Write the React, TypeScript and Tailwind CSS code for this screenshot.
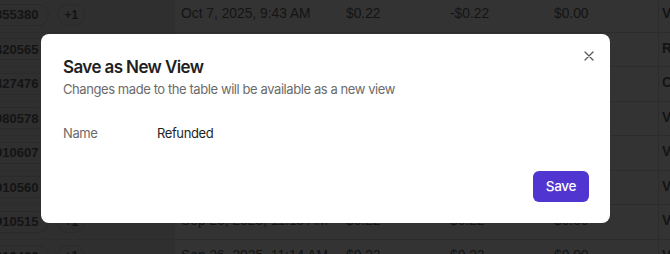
import React from "react";

const rows = [
  { id: "355380", date: "Oct 7, 2025, 9:43 AM", a: "$0.22", b: "-$0.22", c: "$0.00", s: "V" },
  { id: "420565", date: "Oct 7, 2025, 9:40 AM", a: "$0.22", b: "-$0.22", c: "$0.00", s: "R" },
  { id: "427476", date: "Oct 6, 2025, 3:12 PM", a: "$0.22", b: "$0.22", c: "$0.00", s: "C" },
  { id: "080578", date: "Oct 2, 2025, 10:05 AM", a: "$0.22", b: "$0.22", c: "$0.00", s: "V" },
  { id: "910607", date: "Sep 26, 2025, 11:17 AM", a: "$0.22", b: "$0.22", c: "$0.00", s: "V" },
  { id: "910560", date: "Sep 26, 2025, 11:16 AM", a: "$0.22", b: "$0.22", c: "$0.00", s: "V" },
  { id: "910515", date: "Sep 26, 2025, 11:15 AM", a: "$0.22", b: "$0.22", c: "$0.00", s: "V" },
  { id: "910466", date: "Sep 26, 2025, 11:14 AM", a: "$0.22", b: "$0.22", c: "$0.00", s: "V" },
];

export default function App() {
  return (
    <div
      className="relative w-[670px] h-[254px] overflow-hidden bg-[#333333] text-[#141414]"
      style={{ fontFamily: '"Liberation Sans", Arial, sans-serif' }}
    >
      <div className="-mt-[2px] flex flex-col">
        {rows.map((r, i) => (
          <div
            key={i}
            className="flex h-[34.5px] shrink-0 items-center border-b border-[#2c2c2c] text-[13.8px]"
          >
            <div className="flex h-full w-[175px] shrink-0 items-center bg-[#2f2f2f]">
              <div className="-ml-[14px] flex h-[22px] items-center rounded-full border border-[#2a2a2a] pl-[8px] pr-[10px] text-[13px] font-bold">
                {r.id}
              </div>
              <div className="ml-[8px] flex h-[22px] w-[28px] items-center justify-center rounded-full border border-[#2a2a2a] text-[12px] font-bold">
                +1
              </div>
            </div>
            <div className="w-[171px] shrink-0 pl-[6px]">{r.date}</div>
            <div className="w-[104px] shrink-0">{r.a}</div>
            <div className="w-[104px] shrink-0">{r.b}</div>
            <div className="w-[104px] shrink-0">{r.c}</div>
            <div className="flex h-full flex-1 items-center border-l border-[#2c2c2c] pl-[3px] font-bold">
              {r.s}
            </div>
          </div>
        ))}
      </div>

      <div
        className="absolute left-[41px] top-[34px] flex h-[189px] w-[569px] flex-col rounded-[8px] bg-white pl-[22px] pr-[21px] pt-[21px] pb-[21px]"
        style={{ fontFamily: 'Inter, "Noto Sans", sans-serif' }}
      >
        <button className="absolute right-[14px] top-[14.5px] flex h-[14px] w-[14px] items-center justify-center text-[#5a5a5a]">
          <svg width="14" height="14" viewBox="0 0 14 14" fill="none">
            <path d="M3 3L11 11M11 3L3 11" stroke="currentColor" strokeWidth="1.3" strokeLinecap="round" />
          </svg>
        </button>
        <div className="text-[17px] leading-[24px] font-semibold tracking-[-0.6px] text-[#1f1f1f]">
          Save as New View
        </div>
        <div className="text-[13px] leading-[20px] tracking-[-0.42px] text-[#6b6b6b]">
          Changes made to the table will be available as a new view
        </div>
        <div className="mt-[24px] flex text-[13px] leading-[20px] tracking-[-0.4px]">
          <div className="w-[94px] text-[#6b6b6b]">Name</div>
          <div className="text-[#1f1f1f]">Refunded</div>
        </div>
        <div className="mt-auto flex justify-end">
          <button className="flex h-[31px] w-[56px] items-center justify-center rounded-[6px] bg-[#5035d0] text-[13.5px] font-medium tracking-[-0.3px] text-white">
            Save
          </button>
        </div>
      </div>
    </div>
  );
}
